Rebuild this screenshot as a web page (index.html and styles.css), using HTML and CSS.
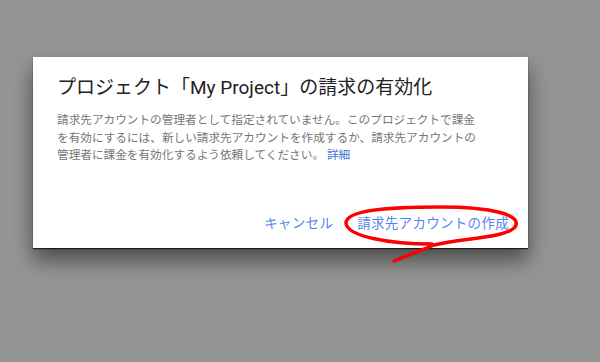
FILE: index.html
```html
<!DOCTYPE html>
<html lang="ja">
<head>
  <meta charset="UTF-8">
  <title>請求の有効化</title>
  <link rel="stylesheet" href="styles.css">
</head>
<body>

  <div class="dialog">
    <h2 class="dialog-title">プロジェクト「My Project」の請求の有効化</h2>
    <p class="dialog-text">
      請求先アカウントの管理者として指定されていません。このプロジェクトで課金<br>
      を有効にするには、新しい請求先アカウントを作成するか、請求先アカウントの<br>
      管理者に課金を有効化するよう依頼してください。 <a href="#" class="more-link">詳細</a>
    </p>
    <div class="dialog-actions">
      <a href="#" class="action-btn">キャンセル</a>
      <a href="#" class="action-btn">請求先アカウントの作成</a>
    </div>
  </div>

  <!-- hand drawn mark over the create button -->
  <svg class="scribble" width="600" height="362" viewBox="0 0 600 362">
    <path d="M394 261 L434 245 C462 238 506 238 515 227 C523 215 492 207 440 207 C388 207 346 210 346 223 C347 237 392 244 432 244"
          fill="none" stroke="#ff0000" stroke-width="3.5" stroke-linecap="round" stroke-linejoin="round"/>
  </svg>

</body>
</html>
```

FILE: styles.css
```css
html, body {
  height: 100%;
  margin: 0;
  padding: 0;
  overflow: hidden;
  background: #959595;
  font-family: Roboto, "Noto Sans CJK JP", sans-serif;
}

body {
  padding-top: 57px;
  box-sizing: border-box;
}

.dialog {
  width: 495px;
  height: 191px;
  margin-left: 33px;
  background: white;
  box-sizing: border-box;
  padding: 19px 19px 15px 24px;
  display: flex;
  flex-direction: column;
  box-shadow: 0 1px 1px rgba(0, 0, 0, 0.7), 0 12px 20px rgba(0, 0, 0, 0.5);
}

.dialog-title {
  margin: 0;
  font-size: 19px;
  line-height: 24px;
  font-weight: normal;
  color: #222222;
}

.dialog-text {
  margin: 12px 0 0 0;
  font-size: 11.65px;
  line-height: 17.5px;
  color: #767676;
  white-space: nowrap;
}

.more-link {
  color: #3f6fd8;
  text-decoration: none;
}

.dialog-actions {
  margin-top: auto;
  display: flex;
  justify-content: flex-end;
  gap: 24px;
}

.action-btn {
  font-size: 13.5px;
  line-height: 20px;
  letter-spacing: 0.3px;
  color: #5784ee;
  text-decoration: none;
}

.scribble {
  position: absolute;
  top: 0;
  left: 0;
}
```
